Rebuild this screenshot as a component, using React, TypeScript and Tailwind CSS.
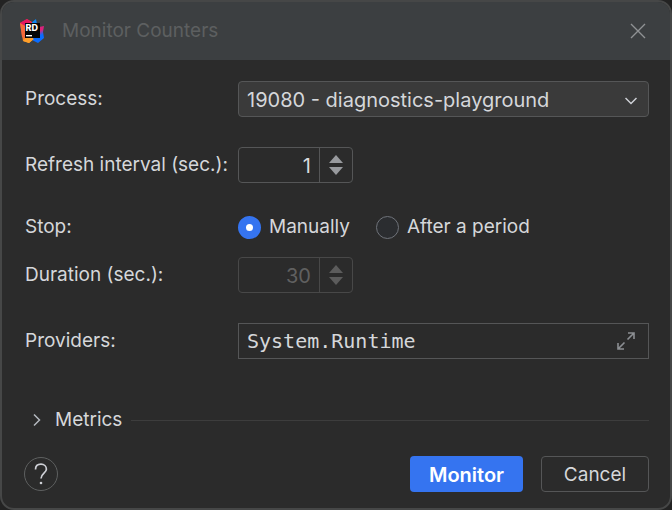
import { useState } from "react";

function AppLogo() {
  return (
    <svg viewBox="0 0 26 26" className="size-[26px]" aria-hidden="true">
      <defs>
        <linearGradient id="rd-warm" x1="0" y1="0" x2="0.4" y2="1">
          <stop offset="0" stopColor="#e8175d" />
          <stop offset="0.5" stopColor="#f0533f" />
          <stop offset="1" stopColor="#ff9a1f" />
        </linearGradient>
        <linearGradient id="rd-cool" x1="0" y1="0" x2="0.3" y2="1">
          <stop offset="0" stopColor="#c02a8a" />
          <stop offset="0.5" stopColor="#e0217a" />
          <stop offset="0.75" stopColor="#0a6cff" />
          <stop offset="1" stopColor="#0a6cff" />
        </linearGradient>
      </defs>
      <path d="M12 5 17 1 18 6Z" fill="#0a84f5" />
      <path d="M18 6 20 9 25 8 24 14 25 20 19 25 13 22Z" fill="url(#rd-cool)" />
      <path d="M1 5 8 1 13 4 14 21 10 25 4 23Z" fill="url(#rd-warm)" />
      <path d="M1 5 8 1 13 5 6 8Z" fill="#e3155f" />
      <path d="M1 5 6 8 6 20 3 19Z" fill="#f4693a" />
      <path d="M4 23 10 25 15 21 9 18Z" fill="#ffa02a" />
      <rect x="6" y="5" width="15" height="15" fill="#050505" />
      <rect x="7" y="17" width="6" height="1.4" fill="#fff" />
      <text x="6.5" y="13" fill="#fff" fontFamily="Inter, sans-serif" fontSize="9" fontWeight="800">
        RD
      </text>
    </svg>
  );
}

type SpinnerProps = {
  id: string;
  value: number;
  disabled?: boolean;
  onChange: (value: number) => void;
};

function Spinner({ id, value, disabled = false, onChange }: SpinnerProps) {
  return (
    <div
      className={`flex h-9 w-[115px] overflow-hidden rounded border ${
        disabled ? "border-[#484848] text-[#606060]" : "border-[#555657] text-[#d8dadd]"
      }`}
    >
      <input
        id={id}
        type="text"
        inputMode="numeric"
        value={value}
        disabled={disabled}
        onChange={(e) => onChange(Number(e.target.value) || 0)}
        className="w-full min-w-0 flex-1 bg-transparent pt-0.5 pr-2 text-right text-[20px] outline-none"
      />
      <div
        className={`flex w-[33px] flex-col items-center justify-center gap-1 border-l ${
          disabled ? "border-[#484848] text-[#5c5c5c]" : "border-[#555657] text-[#989a9e]"
        }`}
      >
        <button type="button" aria-label="Increase" disabled={disabled} onClick={() => onChange(value + 1)}>
          <svg viewBox="0 0 14 8" className="block h-2 w-3.5" fill="currentColor">
            <path d="M7 0 14 8H0Z" />
          </svg>
        </button>
        <button type="button" aria-label="Decrease" disabled={disabled} onClick={() => onChange(value - 1)}>
          <svg viewBox="0 0 14 8" className="block h-2 w-3.5" fill="currentColor">
            <path d="M0 0H14L7 8Z" />
          </svg>
        </button>
      </div>
    </div>
  );
}

const radioClass =
  "size-[23px] appearance-none rounded-full border border-[#6f737a] bg-[#2b2d30] checked:border-[8px] checked:border-[#3574f0] checked:bg-white";

export default function App() {
  const [interval, setInterval] = useState(1);
  const [duration, setDuration] = useState(30);
  const [mode, setMode] = useState("manual");
  const [providers, setProviders] = useState("System.Runtime");

  return (
    <div className="flex min-h-screen bg-[#232323] font-['Inter',sans-serif] text-[19px] leading-6 text-[#d5d7da]">
      <div
        role="dialog"
        aria-labelledby="dialog-title"
        className="flex flex-1 flex-col overflow-hidden rounded-[14px] border-2 border-[#464747] bg-[#2b2b2b]"
      >
        <header className="flex h-[58px] items-center bg-[#3c3f41] pr-5 pl-[17px]">
          <AppLogo />
          <h1 id="dialog-title" className="ml-[17px] flex-1 text-[#5d5f60]">
            Monitor Counters
          </h1>
          <button type="button" aria-label="Close" className="p-1">
            <svg viewBox="0 0 16 16" className="block size-4" fill="none" stroke="#909294" strokeWidth="1.4">
              <path d="M1 1 15 15M15 1 1 15" />
            </svg>
          </button>
        </header>

        <form className="flex flex-1 flex-col pr-[21px] pl-[23px]" onSubmit={(e) => e.preventDefault()}>
          <div className="mt-[21px] grid grid-cols-[213px_1fr] items-center gap-y-[30px]">
            <label htmlFor="process">Process:</label>
            <div className="relative">
              <select
                id="process"
                className="block h-9 w-full appearance-none rounded border border-[#555657] bg-[#3a3a3a] pt-0.5 pr-10 pl-2 text-[20px] outline-none"
              >
                <option>19080 - diagnostics-playground</option>
              </select>
              <svg
                viewBox="0 0 12 8"
                className="pointer-events-none absolute top-4 right-3 h-2 w-3"
                fill="none"
                stroke="#ced0d6"
                strokeWidth="1.5"
              >
                <path d="M0.5 1 6 6.5 11.5 1" />
              </svg>
            </div>

            <label htmlFor="interval" className="whitespace-nowrap">
              Refresh interval (sec.):
            </label>
            <Spinner id="interval" value={interval} onChange={setInterval} />
          </div>

          <div className="mt-8 grid grid-cols-[213px_1fr] items-center gap-y-[18px]">
            <span id="stop-label">Stop:</span>
            <div role="radiogroup" aria-labelledby="stop-label" className="flex items-center gap-[26px]">
              <label className="flex items-center gap-2">
                <input
                  type="radio"
                  name="stop"
                  checked={mode === "manual"}
                  onChange={() => setMode("manual")}
                  className={radioClass}
                />
                Manually
              </label>
              <label className="flex items-center gap-2">
                <input
                  type="radio"
                  name="stop"
                  checked={mode === "period"}
                  onChange={() => setMode("period")}
                  className={radioClass}
                />
                After a period
              </label>
            </div>

            <label htmlFor="duration">Duration (sec.):</label>
            <Spinner id="duration" value={duration} disabled={mode === "manual"} onChange={setDuration} />
          </div>

          <div className="mt-[30px] grid grid-cols-[213px_1fr] items-center">
            <label htmlFor="providers">Providers:</label>
            <div className="flex h-9 items-center border border-[#555657] pr-[13px] pl-2">
              <input
                id="providers"
                type="text"
                value={providers}
                onChange={(e) => setProviders(e.target.value)}
                className="min-w-0 flex-1 bg-transparent font-['DejaVu_Sans_Mono',monospace] text-[20px] outline-none"
              />
              <button type="button" aria-label="Expand">
                <svg viewBox="0 0 18 18" className="block size-[18px]" fill="none" stroke="#8c8f93" strokeWidth="1.6">
                  <path d="M10.5 7.5 17 1M11 1H17V7M7.5 10.5 1 17M1 11V17H7" />
                </svg>
              </button>
            </div>
          </div>

          <div className="mt-[49px] flex items-center">
            <button type="button" aria-expanded="false" className="flex items-center pl-2">
              <svg viewBox="0 0 8 14" className="mr-[14px] h-3.5 w-2" fill="none" stroke="#b4b8bf" strokeWidth="1.5">
                <path d="M1 1.5 6.5 7 1 12.5" />
              </svg>
              Metrics
            </button>
            <div className="ml-[9px] h-px flex-1 bg-[#3d3d3d]" />
          </div>

          <div className="mt-6 mb-4 -ml-px flex items-center">
            <button
              type="button"
              aria-label="Help"
              className="flex size-[34px] items-center justify-center rounded-full border border-[#5e6060]"
            >
              <svg viewBox="0 0 14 22" className="h-[22px] w-3.5" fill="none" stroke="#ced0d6" strokeWidth="1.7">
                <path d="M1.5 6.5C1.5 3 4 1.2 7 1.2S12.4 3.2 12.4 6.2C12.4 10 7 10.5 7 15.5" />
                <circle cx="7" cy="20" r="1.3" fill="#ced0d6" stroke="none" />
              </svg>
            </button>
            <div className="ml-auto flex gap-[18px]">
              <button type="submit" className="h-9 w-[113px] rounded bg-[#3574f0] pt-0.5 text-[20px] font-semibold text-white">
                Monitor
              </button>
              <button type="button" className="h-9 w-[108px] rounded border border-[#555657] pt-0.5">
                Cancel
              </button>
            </div>
          </div>
        </form>
      </div>
    </div>
  );
}
